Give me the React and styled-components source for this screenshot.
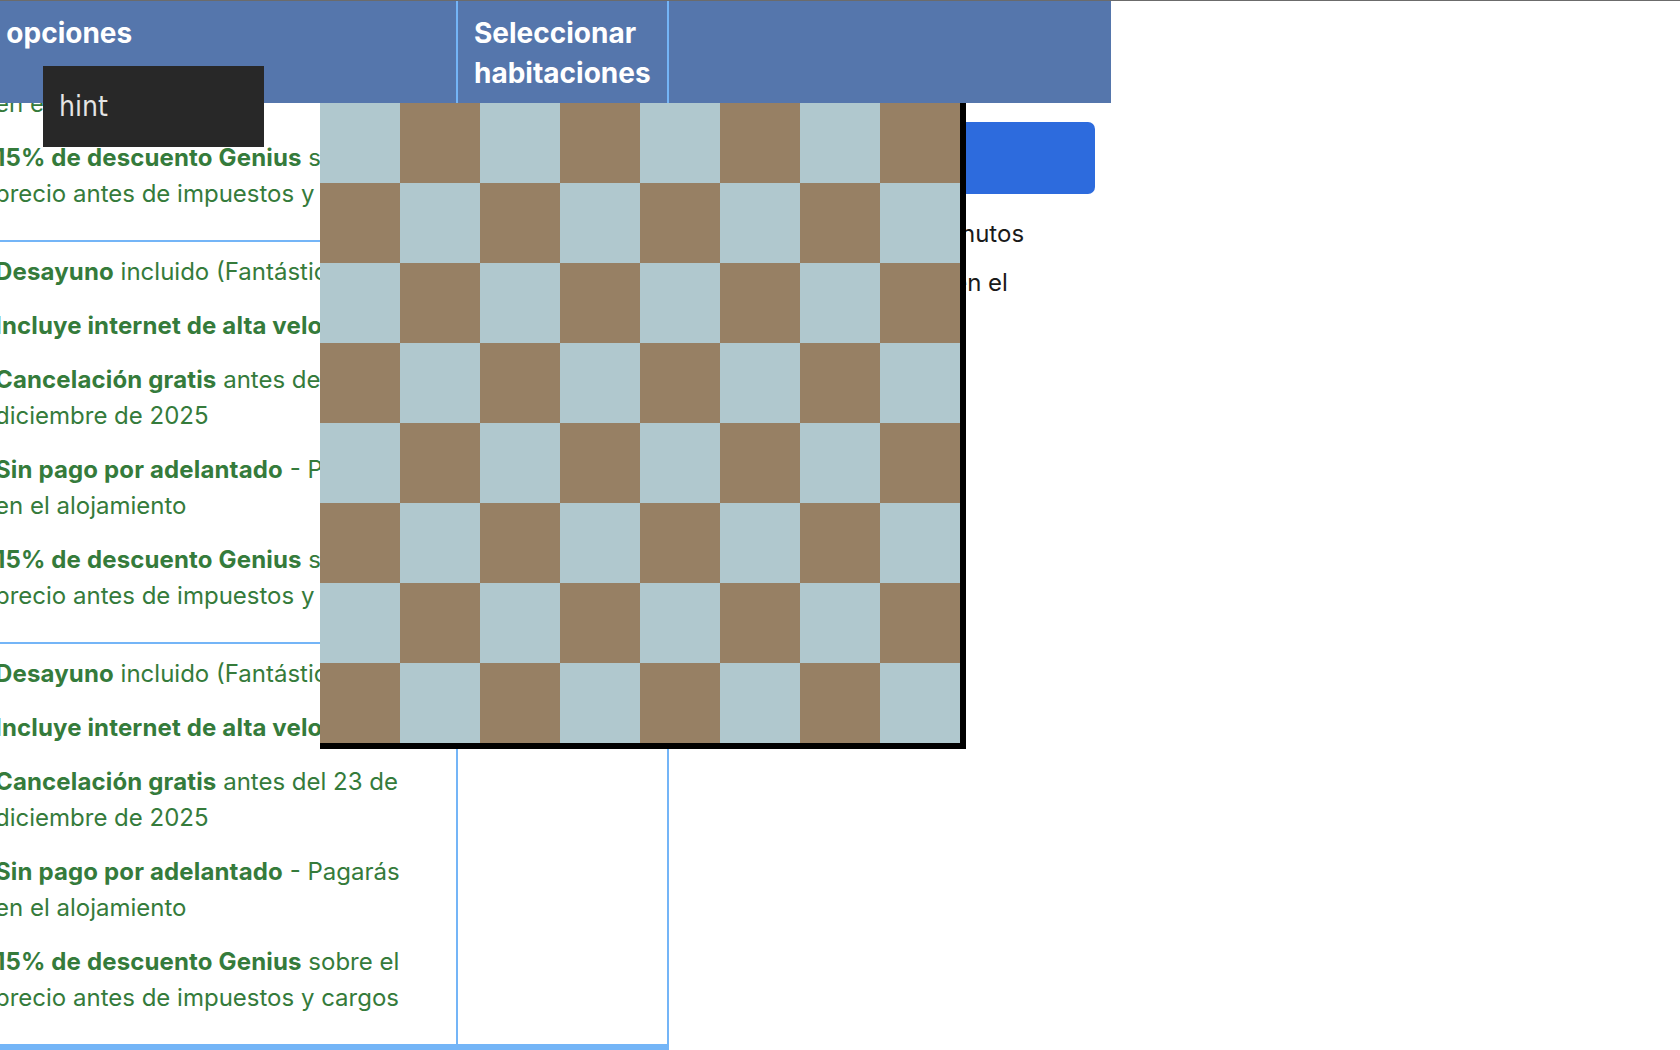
import React from "react";
import styled, { createGlobalStyle } from "styled-components";

const LINE = "#74b5f7";
const COLS = "524px 211px 442px";

const options = [
  { strong: "Desayuno", rest: " incluido (Fantástico)" },
  { strong: "Incluye internet de alta velocidad", rest: "" },
  { strong: "Cancelación gratis", rest: " antes del 23 de diciembre de 2025" },
  { strong: "Sin pago por adelantado", rest: " - Pagarás en el alojamiento" },
  {
    strong: "15% de descuento Genius",
    rest: " sobre el precio antes de impuestos y cargos",
  },
];

const perks = [
  "Solo tardas un par de minutos",
  "Pagarás cómodamente en el alojamiento",
];

const GlobalStyle = createGlobalStyle`
  html, body {
    margin: 0;
    padding: 0;
    background: #fff;
  }
  body {
    font-family: Inter, "Noto Sans", sans-serif;
    overflow: hidden;
  }
`;

const Page = styled.div`
  position: relative;
  height: 100vh;
  box-sizing: border-box;
  border-top: 1px solid #6b6b6b;
  overflow: hidden;
  display: flex;
  flex-direction: column;
`;

const Table = styled.div`
  flex: 1;
  min-height: 0;
  width: 1177px;
  margin-left: -66px;
  display: flex;
  flex-direction: column;
`;

const HeaderRow = styled.div`
  display: grid;
  grid-template-columns: ${COLS};
  height: 102px;
  flex-shrink: 0;
  background: #5576ac;
`;

const HeaderCell = styled.div`
  padding: 12px 16px 10px;
  color: #fff;
  font-size: 28px;
  font-weight: 700;
  line-height: 40px;
  border-right: ${(props) => (props.$last ? "none" : `2px solid ${LINE}`)};
`;

const Body = styled.div`
  flex: 1;
  min-height: 0;
  display: grid;
  grid-template-columns: 735px 442px;
`;

const RowsClip = styled.div`
  overflow: hidden;
`;

const Rows = styled.div`
  margin-top: -263px;
  border-bottom: 6px solid ${LINE};
`;

const Row = styled.div`
  display: grid;
  grid-template-columns: 524px 211px;
  border-bottom: 2px solid ${LINE};
`;

const OptionsCell = styled.div`
  padding: 12px 36px 10px 16px;
  border-right: 2px solid ${LINE};
`;

const OptionList = styled.ul`
  list-style: none;
  margin: 0;
  padding: 0 0 0 45px;
  color: #357b3b;
  font-size: 24px;
  line-height: 36px;

  li {
    margin-bottom: 18px;
  }
  strong {
    font-weight: 700;
    letter-spacing: 0.15px;
  }
`;

const SelectCell = styled.div`
  border-right: 2px solid ${LINE};
`;

const ReserveCell = styled.div`
  padding: 19px 16px;
`;

const ReserveButton = styled.button`
  display: block;
  width: 100%;
  height: 72px;
  border: 0;
  border-radius: 7px;
  background: #2d6bdd;
  color: #fff;
  font-family: Inter, "Noto Sans", sans-serif;
  font-size: 24px;
  font-weight: 700;
`;

const Perks = styled.ul`
  list-style: none;
  margin: 22px 0 0;
  padding: 0;
  color: #1a1a1a;
  font-size: 24px;
  line-height: 36px;

  li + li {
    margin-top: 13px;
  }
`;

const Hint = styled.div`
  position: absolute;
  left: 43px;
  top: 65px;
  width: 221px;
  box-sizing: border-box;
  padding: 24px 16px;
  background: #282828;
  color: #e4e4e4;
  font-family: "DejaVu Sans Condensed", "DejaVu Sans", sans-serif;
  font-stretch: condensed;
  font-size: 28px;
  line-height: 33px;
`;

const Board = styled.div`
  position: absolute;
  left: 320px;
  top: 102px;
  display: grid;
  grid-template-columns: repeat(8, 80px);
  grid-auto-rows: 80px;
  border-right: 6px solid #000;
  border-bottom: 6px solid #000;
`;

const Square = styled.div`
  background: ${(props) => (props.$dark ? "#978064" : "#b0c8ce")};
`;

function OptionsRow() {
  return (
    <Row>
      <OptionsCell>
        <OptionList>
          {options.map((item) => (
            <li key={item.strong}>
              <strong>{item.strong}</strong>
              {item.rest}
            </li>
          ))}
        </OptionList>
      </OptionsCell>
      <SelectCell />
    </Row>
  );
}

export default function App() {
  const squares = [];
  for (let r = 0; r < 8; r++) {
    for (let c = 0; c < 8; c++) {
      squares.push(<Square key={`${r}-${c}`} $dark={(r + c) % 2 === 1} />);
    }
  }

  return (
    <>
      <GlobalStyle />
      <Page>
        <Table>
          <HeaderRow>
            <HeaderCell>Tus opciones</HeaderCell>
            <HeaderCell>Seleccionar habitaciones</HeaderCell>
            <HeaderCell $last />
          </HeaderRow>
          <Body>
            <RowsClip>
              <Rows>
                <OptionsRow />
                <OptionsRow />
                <OptionsRow />
              </Rows>
            </RowsClip>
            <ReserveCell>
              <ReserveButton>Reservaré</ReserveButton>
              <Perks>
                {perks.map((text) => (
                  <li key={text}>{text}</li>
                ))}
              </Perks>
            </ReserveCell>
          </Body>
        </Table>
        <Hint>hint</Hint>
        <Board>{squares}</Board>
      </Page>
    </>
  );
}
